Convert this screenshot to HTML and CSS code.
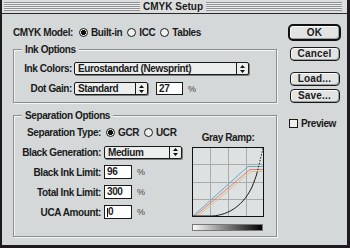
FILE: index.html
```html
<!DOCTYPE html>
<html lang="en">
<head>
  <meta charset="UTF-8">
  <title>CMYK Setup</title>
  <link rel="stylesheet" href="styles.css">
</head>
<body>

  <div class="window">
    <div class="titlebar">
      <span class="stripes"></span>
      <span class="title">CMYK Setup</span>
      <span class="stripes"></span>
    </div>

    <div class="content">
      <div class="main">

        <div class="model-row">
          <span class="model-label">CMYK Model:</span>
          <span class="opt"><span class="radio on"></span>Built-in</span>
          <span class="opt"><span class="radio"></span>ICC</span>
          <span class="opt"><span class="radio"></span>Tables</span>
        </div>

        <fieldset class="group ink">
          <legend>Ink Options</legend>
          <div class="row">
            <span class="label">Ink Colors:</span>
            <div class="popup ink-colors">
              <span class="value">Eurostandard (Newsprint)</span>
              <span class="arrows"><svg width="5" height="8" viewBox="0 0 5 8"><path d="M2.5 0L5 3H0ZM0 5H5L2.5 8Z" fill="#111"/></svg></span>
            </div>
          </div>
          <div class="row">
            <span class="label">Dot Gain:</span>
            <div class="popup dot-gain">
              <span class="value">Standard</span>
              <span class="arrows"><svg width="5" height="8" viewBox="0 0 5 8"><path d="M2.5 0L5 3H0ZM0 5H5L2.5 8Z" fill="#111"/></svg></span>
            </div>
            <span class="field small">27</span>
            <span class="pct">%</span>
          </div>
        </fieldset>

        <fieldset class="group sep">
          <legend>Separation Options</legend>
          <div class="sep-body">
            <div class="sep-form">
              <div class="row">
                <span class="label">Separation Type:</span>
                <span class="radios">
                  <span class="opt"><span class="radio on"></span>GCR</span>
                  <span class="opt"><span class="radio"></span>UCR</span>
                </span>
              </div>
              <div class="row">
                <span class="label">Black Generation:</span>
                <div class="popup black-gen">
                  <span class="value">Medium</span>
                  <span class="arrows"><svg width="5" height="8" viewBox="0 0 5 8"><path d="M2.5 0L5 3H0ZM0 5H5L2.5 8Z" fill="#111"/></svg></span>
                </div>
              </div>
              <div class="row">
                <span class="label">Black Ink Limit:</span>
                <span class="field">96</span>
                <span class="pct">%</span>
              </div>
              <div class="row">
                <span class="label">Total Ink Limit:</span>
                <span class="field">300</span>
                <span class="pct">%</span>
              </div>
              <div class="row">
                <span class="label">UCA Amount:</span>
                <span class="field"><span class="caret"></span>0</span>
                <span class="pct">%</span>
              </div>
            </div>

            <div class="ramp">
              <div class="ramp-label">Gray Ramp:</div>
              <svg class="graph" width="72" height="70" viewBox="0 0 72 70">
                <rect x="0.5" y="0.5" width="71" height="69" fill="#dde1e1" stroke="#111"/>
                <path d="M18.5 1V69M36.5 1V69M54.5 1V69M1 17.5H71M1 35.5H71M1 52.5H71" stroke="#a7abab" fill="none"/>
                <path d="M1 69L56 19.5H71" stroke="#62aec4" fill="none"/>
                <path d="M3 69L58 22.5H71" stroke="#de7c8c" fill="none"/>
                <path d="M6 69L59 24.5H71" stroke="#e2c07c" fill="none"/>
                <path d="M1 69H20C38 68 52 57 60 40C62 35 64 30 65 26" stroke="#1a1a1a" fill="none"/>
                <path d="M65 26C67 18 69 10 71 1" stroke="#1a1a1a" stroke-dasharray="1.5 1.5" fill="none"/>
              </svg>
              <div class="ramp-bar"></div>
            </div>
          </div>
        </fieldset>

      </div>

      <div class="side">
        <div class="btn default">OK</div>
        <div class="btn cancel">Cancel</div>
        <div class="btn load">Load...</div>
        <div class="btn save">Save...</div>
        <div class="check-row"><span class="checkbox"></span>Preview</div>
      </div>
    </div>
  </div>

</body>
</html>
```

FILE: styles.css
```css
body {
  margin: 0;
  background: #2a2027;
  font-family: "Liberation Sans", Arial, sans-serif;
  font-weight: bold;
  font-size: 10px;
  letter-spacing: -0.4px;
  color: #1a1a1a;
  white-space: nowrap;
}

.window {
  width: 350px;
  height: 248px;
  box-sizing: border-box;
  background: #d4d8d8;
  border-left: 2px solid #1d1b1f;
  border-right: 3px solid #1d1b1f;
  border-bottom: 3px solid #1d1b1f;
  display: flex;
  flex-direction: column;
}

/* title bar */

.titlebar {
  height: 13px;
  border-bottom: 1px solid #2a2a2a;
  background: #dcdede;
  display: flex;
  align-items: center;
  padding: 0 5px 0 2px;
}

.stripes {
  flex: 1;
  height: 9px;
  background: repeating-linear-gradient(to bottom, #8e9292 0 1px, #eef0f0 1px 2px);
}

.title {
  padding: 0 3px;
  line-height: 13px;
  letter-spacing: 0;
}

/* layout */

.content {
  flex: 1;
  display: flex;
  padding: 0 6px 0 11px;
  gap: 11px;
}

.main {
  width: 264px;
}

.side {
  width: 53px;
  display: flex;
  flex-direction: column;
  align-items: center;
  padding-top: 10px;
}

/* model row */

.model-row {
  display: flex;
  align-items: center;
  height: 13px;
  margin-top: 12px;
}

.model-label {
  margin-right: 6px;
}

.opt {
  display: inline-flex;
  align-items: center;
  gap: 3px;
  margin-right: 5px;
}

.radio {
  width: 9px;
  height: 9px;
  box-sizing: border-box;
  border: 1px solid #1a1a1a;
  border-radius: 50%;
  background: #eef0f0;
}

.radio.on {
  background: radial-gradient(circle, #111 0 2.3px, #eef0f0 2.8px);
}

/* group boxes */

.group {
  margin: 0;
  padding: 0;
  min-width: 0;
  border: 1px solid #8a8e8e;
  box-shadow: inset 1px 1px 0 #f4f6f6, 1px 1px 0 #f4f6f6;
}

.group legend {
  margin-left: 8px;
  padding: 0 3px;
  line-height: 13px;
  background: #d4d8d8;
}

.ink {
  margin-top: 4px;
  padding: 6px 0 7px 0;
}

.sep {
  margin-top: 6px;
  padding: 3px 12px 5px 0;
}

.row {
  display: flex;
  align-items: center;
  height: 13px;
}

.ink .row + .row {
  margin-top: 7px;
}

.ink .label {
  width: 58px;
  text-align: right;
  margin-right: 2px;
}

.sep-body {
  display: flex;
  justify-content: space-between;
}

.sep-form {
  display: flex;
  flex-direction: column;
  gap: 6px;
}

.sep-form .row {
  height: 14px;
}

.sep .label {
  width: 87px;
  text-align: right;
  margin-right: 3px;
}

.radios {
  display: flex;
  margin-left: 2px;
}

/* controls */

.popup {
  display: flex;
  height: 13px;
  box-sizing: border-box;
  border: 1px solid #1a1a1a;
  border-radius: 2px;
  background: #eceeee;
  box-shadow: 1px 1px 0 #7a7e7e;
}

.popup .value {
  flex: 1;
  padding-left: 3px;
  line-height: 11px;
}

.popup .arrows {
  width: 11px;
  border-left: 1px solid #1a1a1a;
  display: flex;
  align-items: center;
  justify-content: center;
}

.ink-colors {
  width: 175px;
}

.dot-gain {
  width: 74px;
}

.black-gen {
  width: 78px;
}

.field {
  width: 28px;
  height: 14px;
  box-sizing: border-box;
  border: 1px solid #1a1a1a;
  background: #fff;
  padding-left: 2px;
  line-height: 12px;
  display: flex;
  align-items: center;
}

.field.small {
  width: 27px;
  height: 13px;
  margin-left: 8px;
}

.caret {
  width: 1px;
  height: 9px;
  background: #111;
}

.pct {
  margin-left: 5px;
  font-weight: normal;
  color: #444;
  font-size: 9px;
  letter-spacing: 0;
}

/* gray ramp */

.ramp {
  width: 72px;
  padding-top: 6px;
}

.ramp-label {
  line-height: 13px;
  text-align: center;
  margin-bottom: 3px;
}

.graph {
  display: block;
}

.ramp-bar {
  width: 71px;
  height: 7px;
  margin-top: 7px;
  box-sizing: border-box;
  border: 1px solid #777;
  background: linear-gradient(to right, #fafafa, #888 45%, #000);
}

/* buttons */

.btn {
  width: 50px;
  height: 14px;
  box-sizing: border-box;
  border: 1px solid #1a1a1a;
  border-radius: 4px;
  background: #e2e4e4;
  box-shadow: inset -1px -1px 0 #9a9e9e, inset 1px 1px 0 #fafafa;
  text-align: center;
  line-height: 12px;
  letter-spacing: 0.2px;
}

.btn.default {
  width: 53px;
  height: 17px;
  border: 2px solid #111;
  border-radius: 5px;
  line-height: 13px;
}

.cancel {
  margin-top: 6px;
}

.load {
  margin-top: 11px;
}

.save {
  margin-top: 3px;
}

.check-row {
  align-self: flex-start;
  margin: 14px 0 0 1px;
  display: flex;
  align-items: center;
  gap: 3px;
  line-height: 13px;
}

.checkbox {
  width: 9px;
  height: 9px;
  box-sizing: border-box;
  border: 1px solid #1a1a1a;
  background: #eef0f0;
}
```
